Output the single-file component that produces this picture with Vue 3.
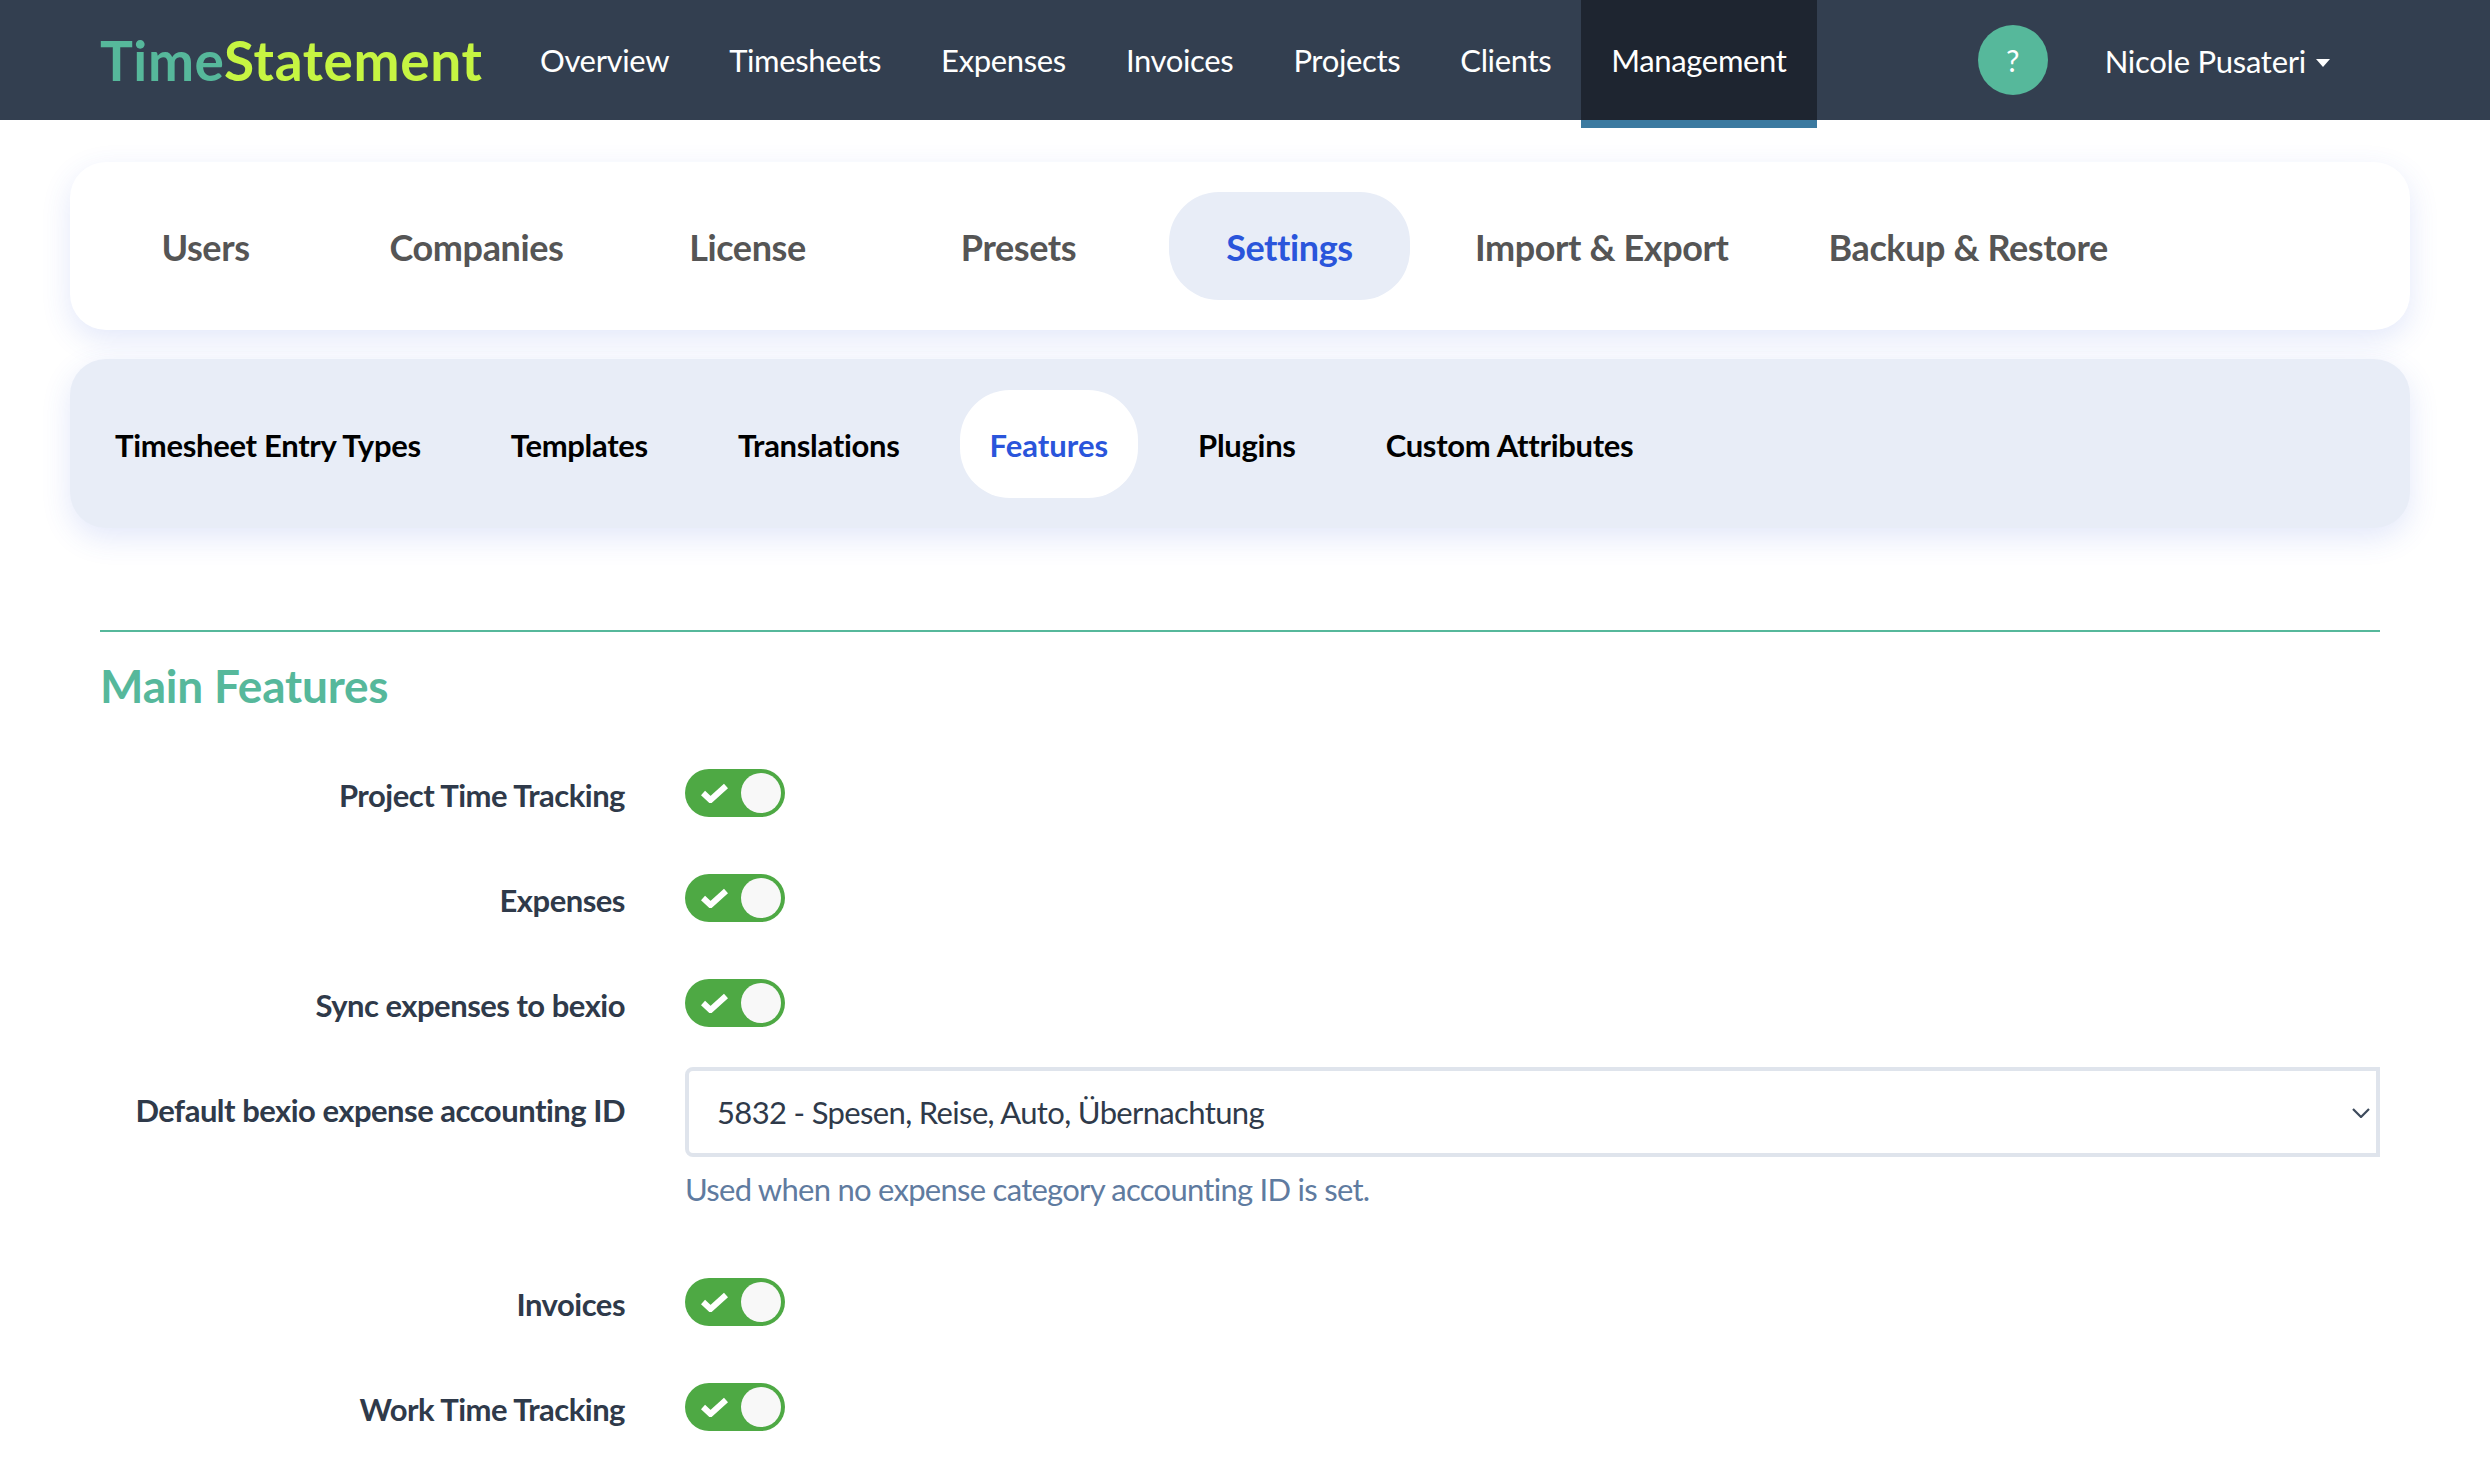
<script setup>
const navItems = ['Overview', 'Timesheets', 'Expenses', 'Invoices', 'Projects', 'Clients', 'Management']
const mainTabs = ['Users', 'Companies', 'License', 'Presets', 'Settings', 'Import & Export', 'Backup & Restore']
const subTabs = ['Timesheet Entry Types', 'Templates', 'Translations', 'Features', 'Plugins', 'Custom Attributes']
</script>

<template>
    <div class="page">
        <header class="header">
            <div class="logo"><span class="logoTime">Time</span><span class="logoStatement">Statement</span></div>
            <nav class="nav">
                <a v-for="item in navItems" :key="item" class="navItem" :class="{ active: item === 'Management' }">{{ item }}</a>
            </nav>
            <div class="user">
                <div class="help">?</div>
                <div class="userName">Nicole Pusateri</div>
                <div class="caret"></div>
            </div>
        </header>

        <main class="main">
            <div class="card tabs">
                <a v-for="tab in mainTabs" :key="tab" class="tab" :class="{ active: tab === 'Settings', wide: tab.length > 10 }">{{ tab }}</a>
            </div>
            <div class="card subTabs">
                <a v-for="tab in subTabs" :key="tab" class="subTab" :class="{ active: tab === 'Features' }">{{ tab }}</a>
            </div>

            <section class="section">
                <h2 class="sectionTitle">Main Features</h2>

                <div class="row">
                    <label class="label">Project Time Tracking</label>
                    <div class="toggle">
                        <svg class="check" viewBox="0 0 27 20"><path d="M2 10 L9.5 17 L25 3" /></svg>
                        <span class="knob"></span>
                    </div>
                </div>
                <div class="row">
                    <label class="label">Expenses</label>
                    <div class="toggle">
                        <svg class="check" viewBox="0 0 27 20"><path d="M2 10 L9.5 17 L25 3" /></svg>
                        <span class="knob"></span>
                    </div>
                </div>
                <div class="row beforeSelect">
                    <label class="label">Sync expenses to bexio</label>
                    <div class="toggle">
                        <svg class="check" viewBox="0 0 27 20"><path d="M2 10 L9.5 17 L25 3" /></svg>
                        <span class="knob"></span>
                    </div>
                </div>

                <div class="row selectRow">
                    <label class="label selectLabel">Default bexio expense accounting ID</label>
                    <div>
                        <div class="selectWrap">
                            <select class="select">
                                <option>5832 - Spesen, Reise, Auto, Übernachtung</option>
                            </select>
                            <svg class="chevron" viewBox="0 0 18 10"><path d="M1 1 L9 9 L17 1" /></svg>
                        </div>
                        <div class="hint">Used when no expense category accounting ID is set.</div>
                    </div>
                </div>

                <div class="row">
                    <label class="label">Invoices</label>
                    <div class="toggle">
                        <svg class="check" viewBox="0 0 27 20"><path d="M2 10 L9.5 17 L25 3" /></svg>
                        <span class="knob"></span>
                    </div>
                </div>
                <div class="row">
                    <label class="label">Work Time Tracking</label>
                    <div class="toggle">
                        <svg class="check" viewBox="0 0 27 20"><path d="M2 10 L9.5 17 L25 3" /></svg>
                        <span class="knob"></span>
                    </div>
                </div>
            </section>
        </main>
    </div>
</template>

<style>
html,
body {
    margin: 0;
    background: white;
}
</style>

<style scoped>
.page {
    width: 2490px;
    height: 1478px;
    overflow: hidden;
    font-family: Lato, "Liberation Sans", sans-serif;
    background: white;
}

.header {
    height: 120px;
    display: flex;
    background: #333f50;
    padding-left: 100px;
}

.logo {
    width: 380px;
    margin-right: 30px;
    font-size: 55px;
    font-weight: 700;
    line-height: 120px;
    letter-spacing: 0.6px;
    white-space: nowrap;
}

.logoTime {
    color: #56b89b;
}

.logoStatement {
    color: #c6f542;
}

.nav {
    display: flex;
}

.navItem {
    padding: 0 30px;
    font-size: 31px;
    letter-spacing: -0.35px;
    line-height: 121px;
    color: white;
    white-space: nowrap;
}

.navItem.active {
    background: #1e2530;
    box-shadow: 0 8px 0 #3c7aa0;
}

.user {
    margin-left: auto;
    padding-right: 160px;
    display: flex;
    align-items: center;
    color: white;
}

.help {
    width: 70px;
    height: 70px;
    margin-right: 57px;
    border-radius: 50%;
    background: #56b89b;
    font-size: 30px;
    line-height: 70px;
    text-align: center;
}

.userName {
    font-size: 31px;
    letter-spacing: -0.25px;
    margin-top: 2px;
    white-space: nowrap;
}

.caret {
    margin-left: 10px;
    margin-top: 6px;
    border-top: 8px solid white;
    border-left: 7px solid transparent;
    border-right: 7px solid transparent;
}

.main {
    padding: 42px 80px 0 70px;
}

.card {
    height: 168px;
    box-sizing: border-box;
    padding: 30px 15px;
    display: flex;
    border-radius: 36px;
    box-shadow: 0 10px 30px rgba(60, 90, 220, .14);
}

.tabs {
    gap: 30px;
    background: white;
}

.tab {
    min-width: 241px;
    box-sizing: border-box;
    padding: 0 33px;
    border-radius: 50px;
    font-size: 36px;
    letter-spacing: -0.4px;
    font-weight: 700;
    line-height: 110px;
    text-align: center;
    color: #555555;
    white-space: nowrap;
}

.tab.wide {
    padding: 0 35px;
}

.tab.active {
    background: #e8edf7;
    color: #2a55db;
}

.subTabs {
    height: 169px;
    margin-top: 29px;
    padding-top: 31px;
    gap: 30px;
    background: #e8edf7;
}

.subTab {
    height: 108px;
    padding: 0 30px;
    border-radius: 50px;
    font-size: 31px;
    letter-spacing: -0.3px;
    font-weight: 700;
    line-height: 110px;
    color: black;
    white-space: nowrap;
}

.subTab.active {
    background: white;
    color: #2a55db;
    letter-spacing: 0;
}

.section {
    margin: 102px 30px 0;
    border-top: 2px solid #56b89b;
}

.sectionTitle {
    margin: 26px 0 55px;
    font-size: 46px;
    letter-spacing: -0.2px;
    font-weight: 700;
    line-height: 56px;
    color: #56b89b;
}

.row {
    display: grid;
    grid-template-columns: 525px 1fr;
    column-gap: 60px;
    margin-bottom: 52px;
}

.row.beforeSelect {
    margin-bottom: 35px;
}

.row.selectRow {
    margin-bottom: 69px;
}

.label {
    font-size: 31px;
    letter-spacing: -0.5px;
    font-weight: 700;
    line-height: 53px;
    text-align: right;
    color: #2f3a4a;
    white-space: nowrap;
}

.selectLabel {
    line-height: 86px;
}

.toggle {
    position: relative;
    width: 100px;
    height: 48px;
    border-radius: 24px;
    background: #4ea944;
}

.check {
    position: absolute;
    left: 16px;
    top: 14px;
    width: 27px;
    height: 20px;
    fill: none;
    stroke: white;
    stroke-width: 6;
}

.knob {
    position: absolute;
    right: 4px;
    top: 4px;
    width: 40px;
    height: 40px;
    border-radius: 50%;
    background: #f8f8f8;
}

.selectWrap {
    position: relative;
}

.select {
    display: block;
    width: 100%;
    height: 90px;
    box-sizing: border-box;
    padding: 0 28px;
    border: 4px solid #dfe4ec;
    border-radius: 8px 0 0 8px;
    background: white;
    appearance: none;
    outline: none;
    font-family: Lato, "Liberation Sans", sans-serif;
    font-size: 31px;
    letter-spacing: -0.65px;
    color: #2f3a4a;
}

.chevron {
    position: absolute;
    right: 10px;
    top: 41px;
    width: 18px;
    height: 10px;
    fill: none;
    stroke: #3d4a5c;
    stroke-width: 2.2;
}

.hint {
    margin-top: 12px;
    font-size: 31px;
    letter-spacing: -0.73px;
    line-height: 40px;
    color: #5f7ba0;
    white-space: nowrap;
}
</style>
